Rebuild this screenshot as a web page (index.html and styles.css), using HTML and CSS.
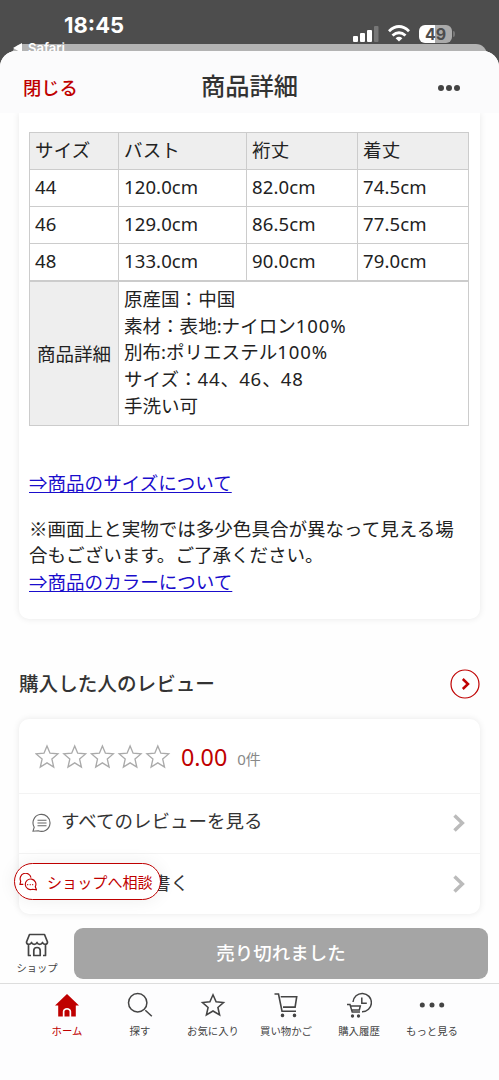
FILE: index.html
```html
<!DOCTYPE html>
<html lang="ja">
<head>
<meta charset="utf-8">
<meta name="viewport" content="width=device-width, initial-scale=1">
<title>商品詳細</title>
<link rel="stylesheet" href="styles.css">
</head>
<body>
<div class="screen">
  <div class="status">
    <div class="clock">18:45</div>
    <div class="indicators">
      <svg class="signal" width="26" height="16" viewBox="0 0 26 16" fill="#fff"><rect x="0" y="10" width="5" height="6" rx="1"/><rect x="7" y="7" width="5" height="9" rx="1"/><rect x="14" y="4" width="5" height="12" rx="1"/><rect x="21" y="0" width="4.500" height="16" rx="1" fill="#777"/></svg>
      <svg class="wifi" width="22" height="17" viewBox="0 0 22 17" fill="none" stroke="#fff" stroke-width="2.900"><path d="M1 6.200Q11-3 21 6.200M4.500 10.500Q11 4.800 17.500 10.500"/><path d="M11 16.500 7.600 13.200Q11 10.500 14.400 13.200Z" fill="#fff" stroke="none"/></svg>
      <div class="battery">49</div>
      <div class="battery-tip"></div>
    </div>
  </div>
  <div class="back-sheet"></div>
  <div class="safari"><svg width="10" height="10" viewBox="0 0 10 10"><path d="M9 0v10L0 5z" fill="#fff"/></svg>Safari</div>
  <div class="sheet">
    <header class="header">
      <span class="close">閉じる</span>
      <h1 class="title">商品詳細</h1>
      <svg class="more" width="24" height="8" viewBox="0 0 24 8" fill="#444"><circle cx="4" cy="4" r="3"/><circle cx="12" cy="4" r="3"/><circle cx="20" cy="4" r="3"/></svg>
    </header>
    <main class="content">
      <section class="card detail">
        <div class="table">
          <div class="row head"><span>サイズ</span><span>バスト</span><span>裄丈</span><span>着丈</span></div>
          <div class="row"><span>44</span><span>120.0cm</span><span>82.0cm</span><span>74.5cm</span></div>
          <div class="row"><span>46</span><span>129.0cm</span><span>86.5cm</span><span>77.5cm</span></div>
          <div class="row"><span>48</span><span>133.0cm</span><span>90.0cm</span><span>79.0cm</span></div>
        </div>
        <div class="spec">
          <div class="spec-name">商品詳細</div>
          <div class="spec-text">原産国：中国<br>素材：表地:ナイロン<span class="num">100%</span><br>別布:ポリエステル<span class="num">100%</span><br>サイズ：<span class="num">44</span>、<span class="num">46</span>、<span class="num">48</span><br>手洗い可</div>
        </div>
        <p class="note size-link"><a href="#">⇒商品のサイズについて</a></p>
        <p class="note">※画面上と実物では多少色具合が異なって見える場<br>合もございます。ご了承ください。<br><a href="#">⇒商品のカラーについて</a></p>
      </section>
      <div class="section-head">
        <h2>購入した人のレビュー</h2>
        <svg width="30" height="30" viewBox="0 0 30 30" fill="none" stroke="#bf0000"><circle cx="15" cy="15" r="14" stroke-width="1.200"/><path d="m12.800 10 5.200 5-5.200 5" stroke-width="2.500"/></svg>
      </div>
      <section class="card reviews">
        <div class="rating">
          <svg class="stars" width="137" height="26" viewBox="0 0 137 26" fill="none" stroke="#aaa" stroke-width="1.350">
            <defs><path id="star" d="m12 2 3 7.200 7.900.7-6 5.200 1.800 7.900L12 18.900 5.300 23l1.800-7.900-6-5.200L9 9.200z"/></defs>
            <use href="#star"/><use href="#star" x="27.700"/><use href="#star" x="55.400"/><use href="#star" x="83.100"/><use href="#star" x="110.800"/>
          </svg>
          <span class="score">0.00</span><span class="count">0件</span>
        </div>
        <div class="item">
          <svg width="20" height="20" viewBox="0 0 20 20" fill="none" stroke="#666" stroke-width="1.100"><path d="M2.200 14.200A8.500 8.500 0 1 1 6.200 17.700L1 18.200z"/><path d="M5.500 7.200h9M5.500 10h9M5.500 12.800h9"/></svg>
          <span class="label">すべてのレビューを見る</span>
          <svg class="chevron" width="12" height="18" viewBox="0 0 12 18" fill="none" stroke="#bbb" stroke-width="3.500"><path d="m1.500 1.500 7.800 7.500-7.800 7.500"/></svg>
        </div>
        <div class="item last">
          <span class="label write">書く</span>
          <svg class="chevron" width="12" height="18" viewBox="0 0 12 18" fill="none" stroke="#bbb" stroke-width="3.500"><path d="m1.500 1.500 7.800 7.500-7.800 7.500"/></svg>
          <div class="chat">
            <svg width="18" height="18" viewBox="0 0 18 18" fill="none" stroke="#bf0000" stroke-width="1.150"><path d="M4.300 11.300H1l.7-3.100A5.500 5.500 0 1 1 12 4.600"/><path d="M16.300 13.800A5.300 5.300 0 1 0 13.500 16.300l4 .5z"/><path d="M8.200 11.600h1m1.500 0h1m1.500 0h1" stroke-width="1.400"/></svg>
            <span>ショップへ相談</span>
          </div>
        </div>
      </section>
    </main>
    <div class="purchase">
      <div class="shop">
        <svg width="24" height="24" viewBox="0 0 24 24" fill="none" stroke="#444" stroke-width="1.700" stroke-linejoin="round"><path d="M4.500 1.500h15l3 7.500c0 3-4 3-5 .5-1 2.500-4.500 2.500-5.500 0-1 2.500-4.500 2.500-5.500 0-1 2.500-5 2.500-5-.5zM3.500 11.500V22.500H6M20.500 11.500V22.500H18M8.800 22.500V17.500c0-4 6.400-4 6.400 0v5z"/></svg>
        <span>ショップ</span>
      </div>
      <div class="sold">売り切れました</div>
    </div>
    <nav class="tabs">
      <div class="tab active"><svg width="26" height="26" viewBox="0 0 26 26"><path d="m13 2 12 11.500H21.800v11H17.200v-5c0-4.700-8.400-4.700-8.400 0v5H4.200v-11H1zM10.500 24.500v-5c0-2.500 5-2.500 5 0v5z" fill="#bf0000"/></svg><span>ホーム</span></div>
      <div class="tab"><svg width="26" height="26" viewBox="0 0 26 26" fill="none" stroke="#444" stroke-width="1.500"><circle cx="10.700" cy="10.700" r="9.200"/><path d="m18.300 18.300 6.500 6"/></svg><span>探す</span></div>
      <div class="tab"><svg width="26" height="26" viewBox="0 0 26 26" fill="none" stroke="#444" stroke-width="1.550"><path d="m13 2.800 3.100 7 7.400.7-5.600 5 1.700 7.500-6.600-4-6.600 4 1.700-7.500-5.600-5 7.400-.7z"/></svg><span>お気に入り</span></div>
      <div class="tab"><svg width="26" height="26" viewBox="0 0 26 26" fill="none" stroke="#444" stroke-width="1.600"><path d="M1.500 2h4l3.500 17.200h14M7.700 4.800h16l-1.600 10.300H10"/><circle cx="9.500" cy="23.400" r="1" fill="#444"/><circle cx="21.500" cy="23.400" r="1" fill="#444"/></svg><span>買い物かご</span></div>
      <div class="tab"><svg width="26" height="26" viewBox="0 0 26 26" fill="none" stroke="#444" stroke-width="1.500"><path d="M7 10A9.200 9.200 0 1 1 16 19.800M15.800 5.500v5.800h5"/><path d="M1 12.500h3L6.200 20H14M4.700 14H14.300l-1 4H6"/><circle cx="6.500" cy="24" r=".9" fill="#444"/><circle cx="12.500" cy="24" r=".9" fill="#444"/></svg><span>購入履歴</span></div>
      <div class="tab"><svg width="26" height="26" viewBox="0 0 26 26" fill="#444"><circle cx="3.300" cy="13" r="2.500"/><circle cx="13" cy="13" r="2.500"/><circle cx="22.700" cy="13" r="2.500"/></svg><span>もっと見る</span></div>
    </nav>
  </div>
</div>
</body>
</html>
```
FILE: styles.css
```css
* { box-sizing: border-box; }
body { margin: 0; background: #4d4d4d; font-family: "Noto Sans", "Noto Sans CJK JP", sans-serif; color: #222; }
h1, h2, p { margin: 0; }
.screen { position: relative; height: 1080px; overflow: hidden; display: flex; flex-direction: column; }
.status { height: 44px; flex: none; display: flex; justify-content: space-between; padding: 0 44px 0 64px; }
.clock { color: #fff; font: 700 22px/51px Inter, sans-serif; }
.indicators { display: flex; align-items: center; padding-top: 23px; }
.wifi { margin-left: 9px; }
.battery { margin-left: 9px; width: 33px; height: 18px; border-radius: 6px; background: linear-gradient(90deg, #fff 50%, #aaa 50%); color: #4d4d4d; font: 700 16px/18px Inter, sans-serif; text-align: center; }
.battery-tip { width: 2px; height: 6px; margin-left: 1px; border-radius: 0 2px 2px 0; background: #777; }
.back-sheet { height: 30px; flex: none; margin: 0 12px -23px; border-radius: 11px 11px 0 0; background: #b3b3b3; }
.safari { position: absolute; left: 13px; top: 40px; display: flex; align-items: center; gap: 5px; color: #fff; font: 600 13px/16px Inter, sans-serif; }
.sheet { position: relative; flex: 1; min-height: 0; display: flex; flex-direction: column; border-radius: 16px 16px 0 0; background: #fefefe; overflow: hidden; }
.header { height: 62px; flex: none; display: grid; grid-template-columns: 1fr auto 1fr; align-items: center; padding: 10px 38px 0 38px; background: #fbfbfc; position: relative; z-index: 1; }
.close { margin-left: -15px; color: #bf0000; font-size: 18.300px; font-weight: 500; }
.title { margin-top: -3px; font-size: 24.300px; font-weight: 500; line-height: 30px; color: #333; }
.more { justify-self: end; margin-top: 1px; }
.content { height: 814px; flex: none; padding: 0 19px; overflow: hidden; }
.card { background: #fff; box-shadow: 0 0 7px rgba(0, 0, 0, .09); }
.detail { height: 506px; padding: 19px 11px 0 10px; border-radius: 0 0 10px 10px; font-size: 18.550px; }
.table { border: 1px solid #ccc; border-bottom: 0; }
.row { display: grid; grid-template-columns: 88px 128px 111px 1fr; height: 37px; border-bottom: 1px solid #ccc; line-height: 34px; }
.row > span { padding-left: 5px; border-left: 1px solid #ccc; letter-spacing: .1px; }
.row > span:first-child { border-left: 0; }
.head { background: #eee; }
.spec { display: grid; grid-template-columns: 89px 1fr; height: 145px; border: 1px solid #ccc; }
.spec-name { display: flex; align-items: center; justify-content: center; padding-bottom: 3px; background: #eee; border-right: 1px solid #ccc; }
.spec-text { padding: 4px 0 0 5px; line-height: 26.700px; }
.num { letter-spacing: .9px; }
.note { line-height: 26.500px; white-space: nowrap; font-family: "Noto Sans CJK JP", sans-serif; }
.size-link { margin: 43px 0 19px; }
.note a { color: #1a0dcc; text-decoration: underline; text-decoration-thickness: 1px; text-underline-offset: 2px; }
.section-head { height: 100px; display: flex; align-items: center; justify-content: space-between; padding-top: 29px; }
.section-head h2 { margin-top: -3px; font-size: 19.600px; font-weight: 500; color: #333; }
.reviews { height: 195px; border-radius: 10px; }
.rating { display: flex; align-items: center; height: 75px; padding: 2px 16px 0; border-bottom: 1px solid #f3f3f3; }
.score { margin-left: 9px; color: #bf0000; font-size: 23.300px; }
.count { margin: 2px 0 0 10px; color: #888; font-size: 15px; }
.item { position: relative; display: flex; align-items: center; height: 60px; padding: 0 15px 0 13px; border-bottom: 1px solid #f3f3f3; font-size: 18.500px; color: #333; }
.item > svg { flex: none; margin-top: -1px; }
.item .label { margin: -7px 0 0 9px; }
.item .write { margin: -5px 0 0 120px; }
.item .chevron { margin-left: auto; }
.last { border: 0; }
.chat { position: absolute; left: -5px; top: 9px; width: 147px; height: 37px; display: flex; align-items: center; gap: 10px; padding-left: 4px; border: 1px solid #bf0000; border-radius: 19px; background: #fff; color: #bf0000; font-size: 15.100px; white-space: nowrap; box-shadow: 0 0 18px rgba(0, 0, 0, .07); }
.chat span { margin-top: -2px; }
.purchase { height: 57px; flex: none; display: flex; align-items: flex-start; padding: 1px 11px 0 0; border-bottom: 1px solid #ddd; }
.shop { width: 74px; display: flex; flex-direction: column; align-items: center; padding-top: 5px; color: #444; font-size: 10.300px; line-height: 15px; }
.shop span { margin-top: 4px; }
.sold { flex: 1; height: 51px; border-radius: 9px; background: #a5a5a5; color: #fff; font-size: 18.500px; font-weight: 500; line-height: 50px; text-align: center; }
.tabs { flex: 1; display: grid; grid-template-columns: repeat(6, 73px); justify-content: center; padding-top: 8px; background: #fdfdfe; }
.tab { display: flex; flex-direction: column; align-items: center; color: #444; font-size: 10.400px; line-height: 16px; }
.tab span { margin-top: 5px; }
.active { color: #bf0000; }
```
